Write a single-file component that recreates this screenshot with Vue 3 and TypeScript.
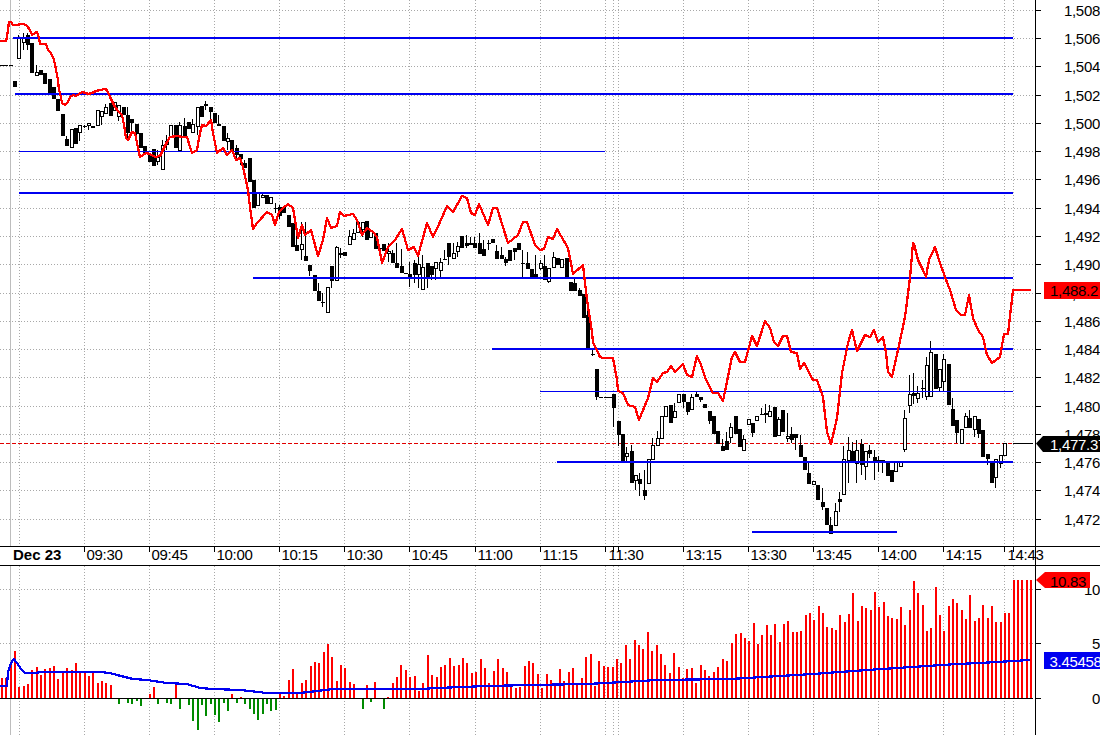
<script setup lang="ts">
type Candle = [number, number, number, number, number];
interface Seg { first: number; last: number; rows: Candle[] }

const segs: Seg[] = [
  { first: 2, last: 249.7, rows: [
    [0,0,65,66,1],[0,0,65,66,1],[0,0,65,66,1],[0,0,81,87,1],[35,58,38,58,0],[33,50,38,42,0],[33,50,35,45,1],[43,73,43,73,1],
    [65,75,72,75,0],[70,75,70,75,1],[73,84,73,84,1],[79,93,79,93,1],[87,99,87,99,1],[99,111,99,111,1],[114,136,114,136,1],
    [136,146,139,146,1],[129,147,129,147,0],[128,144,128,144,1],[125,141,125,132,0],[125,128,126,127,1],[123,130,123,125,0],
    [126,128,126,128,1],[110,125,110,125,0],[111,125,111,116,0],[104,113,107,113,0],[103,116,103,116,1],[102,110,102,110,0],
    [105,121,105,116,0],[107,115,107,115,1],[107,140,115,133,1],[119,133,119,123,1],[124,140,124,134,1],[133,148,133,148,1],
    [146,153,146,153,1],[154,162,154,162,1],[149,166,149,166,1],[150,165,157,161,0],[140,169,145,169,0],[135,150,141,144,0],
    [125,136,125,136,0],[125,148,125,148,1],[122,150,125,150,0],[118,136,126,136,1],[122,129,122,129,1],[119,132,124,132,0],
    [107,135,107,126,0],[106,117,106,117,1],[101,110,104,106,1],[107,124,107,112,1],[113,123,113,123,1],[115,125,124,125,0],
    [126,141,126,141,1],[133,150,138,141,0],[140,151,140,151,1],[145,160,148,155,1],[154,165,154,159,1],[160,168,163,168,1],[158,182,158,182,1]
  ] },
  { first: 254, last: 579.7, rows: [
    [180,208,180,208,1],[193,205,193,205,0],[193,197,195,197,0],[195,204,195,204,1],[197,203,197,203,0],[203,213,208,209,1],
    [205,219,207,216,1],[207,213,207,213,1],[215,227,215,227,1],[223,247,223,247,1],[223,251,245,251,1],[222,260,244,249,0],
    [222,261,256,261,1],[265,276,265,271,1],[275,291,275,291,1],[283,301,291,301,1],[293,307,302,303,1],[287,312,287,312,0],
    [266,288,266,281,1],[246,280,247,280,0],[248,258,253,255,1],[252,256,252,256,1],[230,244,236,244,0],[229,239,233,239,0],
    [222,232,222,232,0],[222,237,222,229,0],[221,240,221,240,1],[230,237,230,237,0],[233,249,233,249,1],[245,255,248,249,1],
    [244,251,244,251,1],[243,262,251,253,0],[250,263,253,263,1],[243,268,263,268,1],[249,273,266,273,1],[273,274,273,274,1],
    [262,287,274,277,1],[260,283,263,275,1],[257,288,264,274,0],[255,289,267,289,0],[263,288,263,279,1],[266,280,266,275,1],
    [262,280,262,268,0],[258,277,262,270,0],[250,260,259,260,1],[243,265,243,257,1],[243,258,253,258,0],[242,257,246,251,0],
    [236,248,236,248,1],[235,248,243,246,1],[237,245,243,245,1],[237,248,243,248,1],[233,254,243,254,1],[240,256,249,256,1],
    [240,250,243,244,1],[239,243,239,243,1],[245,259,251,259,1],[247,259,255,259,1],[257,266,259,263,1],[250,261,250,261,1],
    [248,260,248,252,1],[243,250,243,250,1],[250,277,263,264,1],[252,269,263,269,1],[269,277,269,277,1],[255,277,274,277,1],
    [260,270,263,268,0],[255,280,266,280,1],[268,283,268,281,0],[252,267,257,267,0],[258,265,258,265,1],[259,267,259,267,0],
    [258,277,258,277,1],[282,291,282,291,1],[278,291,283,291,1],[288,296,290,296,1]
  ] },
  { first: 584, last: 818, rows: [
    [294,318,294,318,1],[300,350,315,350,1],[349,356,354,355,1],[369,400,369,397,1],[397,398,397,398,1],[397,398,397,398,1],
    [397,398,397,398,1],[394,427,394,408,1],[421,446,421,435,1],[434,461,434,461,1],[447,463,453,456,0],[445,483,451,483,1],
    [475,490,475,480,0],[473,496,479,484,1],[470,500,490,496,1],[459,483,459,483,0],[438,459,445,459,0],[431,445,438,445,0],
    [416,438,416,438,0],[406,416,406,416,0],[405,423,405,423,1],[403,417,411,417,0],[394,402,394,402,0],[394,408,394,402,1],
    [402,415,402,412,1],[394,409,397,409,0],[392,397,394,397,1],[397,402,397,400,1],[404,408,404,408,1],[411,424,411,421,1],
    [416,434,416,434,1],[431,444,431,444,1],[439,451,446,451,1],[432,450,441,450,1],[423,443,427,437,0],[416,434,416,434,1],
    [429,447,429,447,1],[435,450,439,450,0],[419,424,419,424,0],[423,437,423,433,1],[416,420,416,420,0],[408,415,414,415,1],
    [404,423,413,415,1],[405,416,411,416,0],[407,437,407,437,1],[417,436,419,435,0],[410,432,410,432,1],[413,442,436,438,0],
    [427,443,434,440,1],[434,450,434,438,1],[435,457,445,457,1],[457,470,457,470,1],[463,484,473,484,1],[481,484,481,484,0],[485,500,485,500,1]
  ] },
  { first: 822.7, last: 1005, rows: [
    [488,510,502,507,1],[508,525,508,525,1],[517,534,525,534,1],[503,525,511,525,0],[492,512,499,502,1],[446,494,459,494,0],
    [437,483,450,460,0],[442,463,451,463,1],[440,483,450,463,0],[439,475,444,465,1],[451,480,451,466,0],[445,458,450,454,1],
    [450,480,457,463,1],[456,472,460,461,1],[460,473,460,462,1],[462,476,462,476,1],[470,482,470,482,1],[462,471,462,471,0],
    [462,466,462,466,0],[410,452,418,449,0],[375,413,394,405,0],[373,404,393,396,1],[386,403,393,398,0],[380,398,388,389,1],
    [357,400,365,396,0],[341,396,352,396,0],[354,389,354,389,1],[369,392,369,387,0],[354,392,359,381,0],[364,405,364,405,1],
    [398,426,409,426,1],[420,443,420,433,1],[429,443,429,443,0],[413,427,416,427,0],[410,428,418,428,1],[416,437,416,429,0],
    [419,438,419,434,1],[430,457,430,457,1],[454,465,454,459,1],[462,483,462,483,1],[459,488,459,477,0],[455,468,455,463,0],[443,455,443,455,0]
  ] }
];

// Bar tops as read off the reference, in pixels of the three sections of the lower pane.
const volSegs: { first: number; last: number; tops: number[] }[] = [
  { first: 2, last: 367, tops: [
    678,678,664,651,687,686,684,670,667,675,669,668,666,679,672,668,670,663,671,672,676,671,683,681,683,685,
    699,704,698,703,704,701,706,698,694,687,704,698,703,704,684,709,698,705,721,730,705,716,704,715,722,703,711,694,703,697,704,709,714,720,714,704,711,710,
    692,696,680,669,694,683,680,666,662,663,652,644,657,681,665,668,682,684,698,709,685
  ] },
  { first: 370.7, last: 727, tops: [
    702,682,698,709,697,683,677,665,670,677,676,691,683,655,675,677,667,665,658,666,665,658,663,673,672,659,668,683,671,659,668,672,
    685,688,687,666,661,663,674,688,674,680,686,669,681,672,668,685,678,657,654,686,661,666,667,667,659,663,645,659,640,645,649,632,
    651,645,654,665,673,653,667,678,669,668,683,665,670,676,672,667,659,661
  ] },
  { first: 732, last: 1031, tops: [
    643,634,633,638,641,623,644,635,625,635,624,642,624,621,632,632,631,615,613,620,606,613,627,628,630,615,622,614,593,621,606,608,
    610,592,607,602,616,618,619,607,625,610,581,593,605,631,628,587,615,631,606,599,603,610,619,595,621,618,605,618,606,622,622,613,613,580,580,580,580,580
  ] }
];

function spread(first: number, last: number, n: number, i: number): number {
  return n > 1 ? first + ((last - first) * i) / (n - 1) : first;
}

const candles = segs.flatMap((s) =>
  s.rows.map((r, i) => {
    const c = Math.round(spread(s.first, s.last, s.rows.length, i));
    return { x: c, hi: r[0], lo: r[1], top: r[2], bot: r[3], black: r[4] === 1 };
  })
);

const BASE = 698;
const volBars = volSegs.flatMap((s) =>
  s.tops.map((t, i) => {
    const x = Math.round(spread(s.first, s.last, s.tops.length, i)) - 1;
    const up = t < BASE;
    return { x, y: up ? t : BASE, h: Math.abs(t - BASE), up };
  })
).filter((b) => b.h > 0);

const redLine = [
  0,41,6,41,7,37,9,22,11,22,13,25,18,25,20,24,24,24,27,26,30,30,32,35,35,33,37,32,39,38,40,44,46,44,48,50,50,52,53,57,55,64,56,70,58,80,59,90,60,93,62,103,
  65,105,68,102,70,97,73,95,76,96,79,94,82,92,86,93,88,94,92,93,96,91,100,90,105,89,107,90,110,97,115,107,118,111,122,115,124,125,126,138,128,140,132,132,
  135,133,137,143,140,157,146,153,150,154,155,157,160,156,163,150,167,142,170,137,177,136,183,137,187,137,190,147,192,153,197,150,200,133,202,125,206,126,
  211,120,213,133,217,153,223,148,227,155,232,150,236,160,240,158,243,167,248,190,250,207,253,229,257,223,267,212,272,215,275,225,279,212,283,208,288,204,
  293,208,295,220,298,238,302,225,305,235,311,230,315,245,318,256,323,240,327,218,331,228,337,226,340,212,344,216,353,214,357,220,362,235,367,228,373,232,
  377,237,382,263,388,247,395,240,402,229,408,250,414,247,418,256,427,223,433,237,440,222,447,206,453,212,462,196,467,198,471,213,475,215,479,204,488,225,
  493,208,497,208,508,243,518,235,523,222,527,222,535,245,540,250,544,249,548,237,553,239,557,229,568,248,573,274,583,265,587,300,592,332,593,342,600,357,
  603,358,613,358,617,380,618,391,623,393,628,405,635,407,639,420,648,398,653,378,657,382,663,373,667,372,671,366,675,372,683,364,687,375,692,377,697,356,
  701,365,706,380,713,393,718,393,723,401,732,357,735,352,740,362,745,362,752,336,757,346,765,321,770,328,774,342,778,346,783,336,787,336,791,352,797,353,
  800,369,804,363,813,380,817,380,823,397,827,432,831,444,837,418,842,373,848,343,852,330,857,351,865,335,870,337,874,330,878,342,883,337,886,353,888,372,
  892,377,898,350,905,317,910,278,913,243,914,244,918,260,923,270,926,277,929,260,935,247,940,263,945,277,950,290,956,310,961,315,965,315,969,295,973,318,
  978,330,983,337,987,355,992,363,1000,357,1004,334,1008,334,1013,290,1031,290
].join(" ");

const maLine = [
  0,686,7,686,8,672,11,663,14,659,17,663,21,669,25,673,33,673,43,672,100,672,110,673,117,675,133,679,147,680,167,683,187,684,200,688,213,689,240,690,
  267,693,300,693,317,691,333,689,370,689,420,689,437,688,487,686,530,685,587,684,623,682,657,680,730,679,763,677,813,674,853,671,897,668,957,664,980,663,1030,660
].join(" ");

const levels = [
  { y: 37, x: 13, to: 1013, w: 2 },
  { y: 93, x: 15, to: 1013, w: 2 },
  { y: 151, x: 19, to: 605, w: 1 },
  { y: 192, x: 19, to: 1013, w: 2 },
  { y: 277, x: 253, to: 1013, w: 2 },
  { y: 348, x: 492, to: 1013, w: 2 },
  { y: 391, x: 540, to: 1013, w: 1 },
  { y: 461, x: 557, to: 1013, w: 2 },
  { y: 531, x: 752, to: 897, w: 2 }
];

const gridX = [19, 84, 149, 214, 279, 344, 409, 475, 540, 605, 613, 618, 683, 748, 813, 878, 943, 1004, 1013];

const priceTicks = Array.from({ length: 19 }, (_, k) => {
  const value = 508 - 2 * k;
  return { y: Math.floor(10.3 + 28.27 * k) + 0.5, label: "1," + value };
});

const timeLabels = [
  { x: 86.5, t: "09:30" }, { x: 151.5, t: "09:45" }, { x: 216.5, t: "10:00" }, { x: 281.5, t: "10:15" }, { x: 346.5, t: "10:30" },
  { x: 411.5, t: "10:45" }, { x: 477.5, t: "11:00" }, { x: 542.5, t: "11:15" }, { x: 608.5, t: "11:30" }, { x: 685.5, t: "13:15" },
  { x: 750.5, t: "13:30" }, { x: 815.5, t: "13:45" }, { x: 880.5, t: "14:00" }, { x: 945.5, t: "14:15" }, { x: 1007.5, t: "14:43" }
];

const volTicks = [
  { y: 589.5, label: "10" },
  { y: 643.5, label: "5" },
  { y: 698.5, label: "0" }
];
</script>

<template>
  <div class="chart">
    <svg class="pane price" width="1100" height="546" viewBox="0 0 1100 546">
      <g class="grid">
        <line v-for="t in priceTicks" :key="t.y" x1="0" x2="1035" :y1="t.y" :y2="t.y" />
        <line v-for="x in gridX" :key="x" :x1="x + 0.5" :x2="x + 0.5" y1="0" y2="546" />
      </g>
      <rect class="session" x="10" y="0" width="1" height="546" />
      <line class="last-price" x1="0" x2="1028" y1="443.5" y2="443.5" />

      <g class="candles">
        <template v-for="(c, i) in candles" :key="i">
          <rect v-if="c.hi" class="wick" :x="c.x - 1" :y="c.hi" width="1" :height="c.lo - c.hi" />
          <rect v-if="c.black" class="wick" :x="c.x - 2" :y="c.top" width="4" :height="Math.max(1, c.bot - c.top)" />
          <rect v-else class="hollow" :x="c.x - 1.5" :y="c.top + 0.5" width="3" :height="Math.max(1, c.bot - c.top)" />
        </template>
        <rect class="wick" x="1013" y="443" width="20" height="1" />
      </g>

      <rect v-for="l in levels" :key="l.y" class="level" :x="l.x" :y="l.y" :width="l.to - l.x" :height="l.w" />
      <polyline class="red-line" :points="redLine" />

      <rect class="axis" x="1035" y="0" width="1" height="546" />
      <g v-for="t in priceTicks" :key="t.label">
        <line class="tick" x1="1036" x2="1041" :y1="t.y" :y2="t.y" />
        <text class="label" x="1100" :y="t.y + 5.5" text-anchor="end">{{ t.label }}</text>
      </g>

      <rect class="tag-red" x="1044" y="282" width="56" height="17" />
      <text class="label" x="1050" y="296">1,488.2</text>
      <polygon class="tag-black" points="1036,443.5 1043,436 1100,436 1100,452 1043,452" />
      <text class="label on-dark" x="1050" y="449.5">1,477.37</text>
    </svg>

    <svg class="pane time" width="1100" height="20" viewBox="0 0 1100 20">
      <rect class="rule" x="0" y="0" width="1100" height="1" />
      <rect class="rule" x="0" y="19" width="1100" height="1" />
      <rect class="axis" x="1035" y="0" width="1" height="20" />
      <line v-for="x in gridX.slice(1)" :key="x" class="tick" :x1="x + 0.5" :x2="x + 0.5" y1="0" y2="6" />
      <text class="label bold" x="13" y="14">Dec 23</text>
      <text v-for="l in timeLabels" :key="l.t" class="label" :x="l.x" y="14">{{ l.t }}</text>
    </svg>

    <svg class="pane volume" width="1100" height="169" viewBox="0 566 1100 169">
      <g class="grid">
        <line v-for="t in volTicks.slice(0, 2)" :key="t.y" x1="0" x2="1035" :y1="t.y" :y2="t.y" />
        <line v-for="x in gridX" :key="x" :x1="x + 0.5" :x2="x + 0.5" y1="566" y2="735" />
      </g>
      <rect class="session" x="10" y="566" width="1" height="169" />
      <rect v-for="(b, i) in volBars" :key="i" :class="b.up ? 'bar-up' : 'bar-down'" :x="b.x" :y="b.y" width="2" :height="b.h" />
      <rect class="rule" x="0" y="698" width="1033" height="1" />
      <polyline class="ma-line" :points="maLine" />

      <rect class="axis" x="1035" y="566" width="1" height="169" />
      <g v-for="t in volTicks" :key="t.label">
        <line class="tick" x1="1036" x2="1041" :y1="t.y" :y2="t.y" />
        <text class="label" x="1100" :y="t.y + 5.5" text-anchor="end">{{ t.label }}</text>
      </g>

      <polygon class="tag-fill-red" points="1036,580 1045,572 1090,572 1090,588 1045,588" />
      <text class="label" x="1050" y="586.5">10.83</text>
      <rect class="tag-blue" x="1044" y="652" width="56" height="17" />
      <text class="label on-dark" x="1049.5" y="666.5">3.45458</text>
    </svg>
  </div>
</template>

<style scoped>
.chart {
  width: 1100px;
  height: 735px;
  display: flex;
  flex-direction: column;
  background: #fff;
  overflow: hidden;
}
.pane {
  display: block;
  flex: none;
}
.grid line {
  stroke: #a8a8a8;
  stroke-width: 1;
  stroke-dasharray: 1 2;
}
.session {
  fill: #bdbdbd;
}
.last-price {
  stroke: #e00000;
  stroke-width: 1;
  stroke-dasharray: 4 2;
}
.wick,
.rule,
.axis {
  fill: #000;
  shape-rendering: crispEdges;
}
.hollow {
  fill: #fff;
  stroke: #000;
  stroke-width: 1;
  shape-rendering: crispEdges;
}
.level {
  fill: #0000f0;
  shape-rendering: crispEdges;
}
.red-line {
  fill: none;
  stroke: #f00;
  stroke-width: 2.3;
  stroke-linejoin: round;
  shape-rendering: crispEdges;
}
.ma-line {
  fill: none;
  stroke: #0000f0;
  stroke-width: 2.2;
  shape-rendering: crispEdges;
}
.tick {
  stroke: #000;
  stroke-width: 1;
  shape-rendering: crispEdges;
}
.label {
  font-family: "Liberation Sans", Arial, sans-serif;
  font-size: 15px;
  letter-spacing: -0.3px;
  fill: #000;
}
.bold {
  font-weight: 700;
  letter-spacing: 0;
}
.on-dark {
  fill: #fff;
}
.tag-red,
.tag-fill-red {
  fill: #f00;
}
.tag-black {
  fill: #000;
}
.tag-blue {
  fill: #0000f0;
}
.bar-up {
  fill: #f00;
  shape-rendering: crispEdges;
}
.bar-down {
  fill: #008a00;
  shape-rendering: crispEdges;
}
</style>
